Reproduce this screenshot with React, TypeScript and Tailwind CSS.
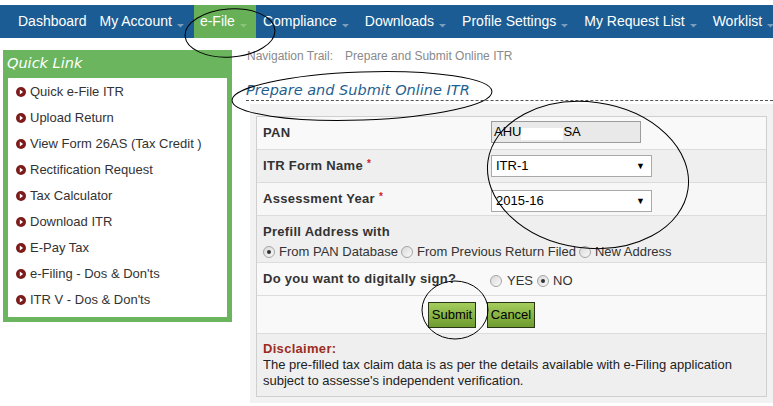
import type { ReactNode } from 'react';

type NavItem = {
  label: string;
  arrow: boolean;
  active?: boolean;
};

const navItems: NavItem[] = [
  { label: 'Dashboard', arrow: false },
  { label: 'My Account', arrow: true },
  { label: 'e-File', arrow: true, active: true },
  { label: 'Compliance', arrow: true },
  { label: 'Downloads', arrow: true },
  { label: 'Profile Settings', arrow: true },
  { label: 'My Request List', arrow: true },
  { label: 'Worklist', arrow: true },
];

const quickLinks = [
  'Quick e-File ITR',
  'Upload Return',
  'View Form 26AS (Tax Credit )',
  'Rectification Request',
  'Tax Calculator',
  'Download ITR',
  'E-Pay Tax',
  "e-Filing - Dos & Don'ts",
  "ITR V - Dos & Don'ts",
];

const Bullet = () => (
  <svg width="10" height="10" viewBox="0 0 10 10" className="shrink-0">
    <circle cx="5" cy="5" r="5" fill="#7d1b1b" />
    <path d="M3.8 2.6 L7.1 5 L3.8 7.4 Z" fill="#fff" />
  </svg>
);

const Radio = ({ checked }: { checked?: boolean }) => (
  <span className="inline-flex w-[12px] h-[12px] shrink-0 rounded-full border border-[#a5a5a5] bg-gradient-to-br from-[#d9d9d9] to-[#fafafa] items-center justify-center">
    {checked && <span className="w-[4px] h-[4px] rounded-full bg-[#333]" />}
  </span>
);

const Select = ({ value }: { value: string }) => (
  <div className="w-[161px] h-[22px] border border-[#a9a9a9] bg-white flex items-center justify-between pl-[4px] pr-[6px] text-[13px] text-black">
    <span>{value}</span>
    <span className="text-[9px] leading-none">▼</span>
  </div>
);

const Row = ({ className, children }: { className: string; children: ReactNode }) => (
  <div className={`border-b border-[#dcdcdc] ${className}`}>{children}</div>
);

const Req = () => <span className="text-[#cc2222] text-[10px] ml-[4px] align-top tracking-normal">*</span>;

export default function App() {
  return (
    <div className="relative w-[773px] h-[406px] overflow-hidden bg-white font-['Liberation_Sans',Arial,sans-serif]">
      {/* Top navigation */}
      <div className="pt-[5px]">
        <nav className="h-[33px] bg-[#1a5c93] flex items-stretch pl-[12px] gap-[1px] whitespace-nowrap">
          {navItems.map((item) => (
            <div
              key={item.label}
              className={`shrink-0 flex items-center px-[6px] text-[14px] text-white ${item.active ? 'bg-[#67b057]' : ''}`}
            >
              <span>{item.label}</span>
              {item.arrow && (
                <svg width="7" height="4" viewBox="0 0 7 4" className="ml-[5px] mr-[3px] mt-[9px]">
                  <path d="M0 0 L7 0 L3.5 3.5 Z" fill={item.active ? '#8cc47c' : '#7c9cbc'} />
                </svg>
              )}
            </div>
          ))}
        </nav>
      </div>

      <div className="flex items-start">
        {/* Quick links */}
        <aside className="ml-[3px] mt-[12px] w-[229px] bg-[#6ab55d] pb-[5px]">
          <div className="h-[28px] flex items-center pl-[4px] text-white text-[14.5px] italic font-light font-['DejaVu_Sans',sans-serif]">
            Quick Link
          </div>
          <ul className="mx-[5px] bg-white pt-[1px] pb-[4px]">
            {quickLinks.map((link) => (
              <li key={link} className="h-[26px] flex items-center gap-[4px] pl-[8px] text-[13px] text-[#333]">
                <Bullet />
                <span>{link}</span>
              </li>
            ))}
          </ul>
        </aside>

        {/* Main content */}
        <main className="ml-[14px] flex-1">
          <div className="mt-[11px] text-[12px] leading-[14px] text-[#8a8a8a] pl-[1px]">
            Navigation Trail:<span className="ml-[12px]">Prepare and Submit Online ITR</span>
          </div>
          <h1 className="mt-[17px] h-[21px] border-b border-dashed border-[#555] text-[14.5px] leading-[20px] italic font-light text-[#1f5f8f] font-['DejaVu_Sans',sans-serif]">
            Prepare and Submit Online ITR
          </h1>

          <div className="ml-[4px] mt-[3px] bg-[#f2f2f2] pt-[12px] px-[6px] pb-[6px]">
            <div className="border border-[#cfcfcf] text-[13px] text-[#333]">
              <Row className="h-[33px] bg-[#f9f9f9] flex items-center">
                <div className="w-[234px] pl-[6px] font-bold tracking-[0.3px]">PAN</div>
                <div className="w-[150px] h-[22px] -mt-[2px] border border-[#9c9c9c] bg-[#e9e9e9] flex items-center pl-[2px] text-black">
                  AHU<span className="inline-block w-[42px] h-[12px] bg-white mt-[4px]" />SA
                </div>
              </Row>
              <Row className="h-[33px] bg-[#efefef] flex items-center">
                <div className="w-[234px] pl-[6px] font-bold tracking-[0.3px]">
                  ITR Form Name<Req />
                </div>
                <Select value="ITR-1" />
              </Row>
              <Row className="h-[33px] bg-[#f7f7f7] flex items-center">
                <div className="w-[234px] pl-[6px] font-bold tracking-[0.3px]">
                  Assessment Year<Req />
                </div>
                <div className="mt-[4px]">
                  <Select value="2015-16" />
                </div>
              </Row>
              <Row className="h-[47px] bg-[#efefef] pt-[8px] pl-[6px]">
                <div className="font-bold leading-[16px] tracking-[0.3px]">Prefill Address with</div>
                <div className="mt-[3px] h-[18px] flex items-center">
                  <Radio checked />
                  <span className="ml-[4px] mr-[3px]">From PAN Database</span>
                  <Radio />
                  <span className="ml-[4px] mr-[3px]">From Previous Return Filed</span>
                  <Radio />
                  <span className="ml-[4px]">New Address</span>
                </div>
              </Row>
              <Row className="h-[33px] bg-[#f9f9f9] flex items-center">
                <div className="w-[233px] pl-[6px] font-bold tracking-[0.3px]">Do you want to digitally sign?</div>
                <div className="flex items-center mt-[4px]">
                  <Radio />
                  <span className="ml-[5px] mr-[4px]">YES</span>
                  <Radio checked />
                  <span className="ml-[4px]">NO</span>
                </div>
              </Row>
              <Row className="h-[38px] bg-[#f9f9f9] flex items-center pl-[171px] gap-[11px]">
                <button className="w-[48px] h-[26px] border border-[#2a3518] bg-gradient-to-b from-[#a4cd5c] to-[#6f9c2e] text-[13px] text-black">
                  Submit
                </button>
                <button className="w-[48px] h-[26px] border border-[#2a3518] bg-gradient-to-b from-[#a4cd5c] to-[#6f9c2e] text-[13px] text-black">
                  Cancel
                </button>
              </Row>
              <div className="h-[62px] bg-[#efefef] pt-[7px] pl-[6px] leading-[16px]">
                <div className="font-bold text-[#9a2d1f] tracking-[0.3px]">Disclaimer:</div>
                <p className="text-[13px] text-[#222]">
                  The pre-filled tax claim data is as per the details available with e-Filing application
                  <br />
                  subject to assesse's independent verification.
                </p>
              </div>
            </div>
          </div>
        </main>
      </div>

      {/* Hand-drawn annotation marks */}
      <svg className="absolute inset-0 pointer-events-none" width="773" height="406" viewBox="0 0 773 406">
        <ellipse cx="230" cy="33" rx="45" ry="24" fill="none" stroke="#000" strokeWidth="1" transform="rotate(-4 230 33)" />
        <ellipse cx="362" cy="96" rx="130" ry="24" fill="none" stroke="#000" strokeWidth="1" transform="rotate(-2 362 96)" />
        <ellipse cx="588" cy="175" rx="101" ry="73" fill="none" stroke="#000" strokeWidth="1" transform="rotate(8 588 175)" />
        <ellipse cx="455" cy="310" rx="33" ry="29" fill="none" stroke="#000" strokeWidth="1" />
      </svg>
    </div>
  );
}
